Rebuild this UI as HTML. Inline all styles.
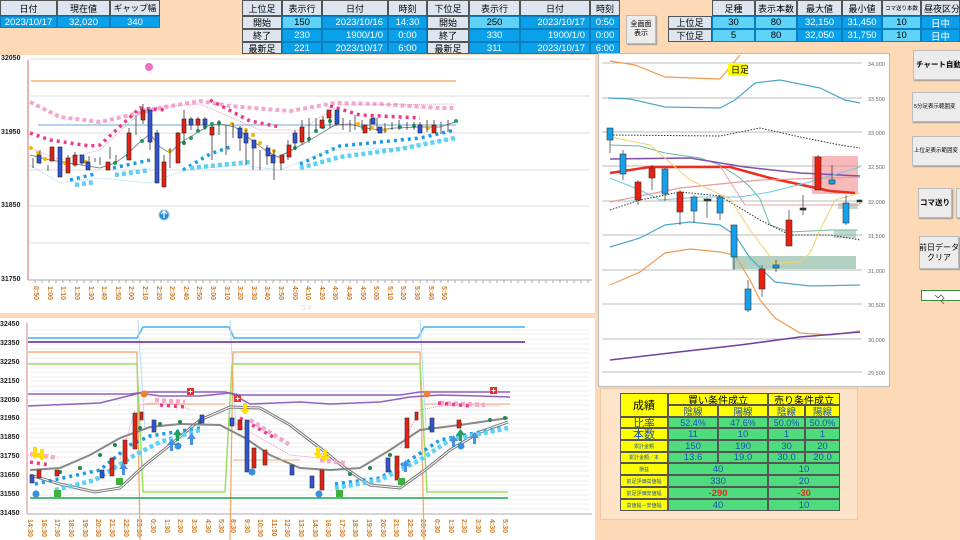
<!DOCTYPE html>
<html><head><meta charset="utf-8">
<style>
*{margin:0;padding:0;box-sizing:border-box}
body{width:960px;height:540px;overflow:hidden;background:#fdd9b6;font-family:"Liberation Sans","Noto Sans CJK JP",sans-serif;position:relative}
.c{position:absolute;display:flex;align-items:center;justify-content:center;font-size:9.5px;color:#000;white-space:nowrap;overflow:hidden}
.h{background:#dde6f0;border:1px solid #555;font-size:9px}
.b{background:#0aa0ea;color:#fff;border:1px solid #0a7fc0}
.lb{background:#5fd3f7;color:#000;border:1px solid #0a7fc0}
.btn{position:absolute;background:#ececec;border:1px solid #bbb;box-shadow:1px 1px 1px #999;font-size:8px;display:flex;align-items:center;justify-content:center;text-align:center;line-height:1.25;overflow:hidden;white-space:nowrap}
.y{background:#ffff00;border:1px solid #555}
.g{background:#4fdc7c;border:1px solid #555;color:#1d4fb0}
.ax{position:absolute;font-size:7px;font-weight:bold;color:#222}
</style></head><body>

<div class="c h" style="left:0;top:0;width:57px;height:16px">日付</div>
<div class="c h" style="left:57px;top:0;width:53px;height:16px">現在値</div>
<div class="c h" style="left:110px;top:0;width:50px;height:16px;font-size:8.5px">ギャップ幅</div>
<div class="c b" style="left:0;top:16px;width:57px;height:12px">2023/10/17</div>
<div class="c b" style="left:57px;top:16px;width:53px;height:12px">32,020</div>
<div class="c b" style="left:110px;top:16px;width:50px;height:12px">340</div>

<div class="c h" style="left:242px;top:0;width:40px;height:16px">上位足</div>
<div class="c h" style="left:282px;top:0;width:40px;height:16px">表示行</div>
<div class="c h" style="left:322px;top:0;width:66px;height:16px">日付</div>
<div class="c h" style="left:388px;top:0;width:39px;height:16px">時刻</div>
<div class="c h" style="left:427px;top:0;width:42px;height:16px">下位足</div>
<div class="c h" style="left:469px;top:0;width:51px;height:16px">表示行</div>
<div class="c h" style="left:520px;top:0;width:70px;height:16px">日付</div>
<div class="c h" style="left:590px;top:0;width:30px;height:16px">時刻</div>

<div class="c h" style="left:242px;top:16px;width:40px;height:13px">開始</div>
<div class="c lb" style="left:282px;top:16px;width:40px;height:13px">150</div>
<div class="c b" style="left:322px;top:16px;width:66px;height:13px;justify-content:flex-end;padding-right:4px">2023/10/16</div>
<div class="c b" style="left:388px;top:16px;width:39px;height:13px">14:30</div>
<div class="c h" style="left:427px;top:16px;width:42px;height:13px">開始</div>
<div class="c lb" style="left:469px;top:16px;width:51px;height:13px">250</div>
<div class="c b" style="left:520px;top:16px;width:70px;height:13px;justify-content:flex-end;padding-right:4px">2023/10/17</div>
<div class="c b" style="left:590px;top:16px;width:30px;height:13px">0:50</div>

<div class="c h" style="left:242px;top:29px;width:40px;height:13px">終了</div>
<div class="c b" style="left:282px;top:29px;width:40px;height:13px">230</div>
<div class="c b" style="left:322px;top:29px;width:66px;height:13px;justify-content:flex-end;padding-right:4px">1900/1/0</div>
<div class="c b" style="left:388px;top:29px;width:39px;height:13px">0:00</div>
<div class="c h" style="left:427px;top:29px;width:42px;height:13px">終了</div>
<div class="c b" style="left:469px;top:29px;width:51px;height:13px">330</div>
<div class="c b" style="left:520px;top:29px;width:70px;height:13px;justify-content:flex-end;padding-right:4px">1900/1/0</div>
<div class="c b" style="left:590px;top:29px;width:30px;height:13px">0:00</div>

<div class="c h" style="left:242px;top:42px;width:40px;height:12px">最新足</div>
<div class="c b" style="left:282px;top:42px;width:40px;height:12px">221</div>
<div class="c b" style="left:322px;top:42px;width:66px;height:12px;justify-content:flex-end;padding-right:4px">2023/10/17</div>
<div class="c b" style="left:388px;top:42px;width:39px;height:12px">6:00</div>
<div class="c h" style="left:427px;top:42px;width:42px;height:12px">最新足</div>
<div class="c b" style="left:469px;top:42px;width:51px;height:12px">311</div>
<div class="c b" style="left:520px;top:42px;width:70px;height:12px;justify-content:flex-end;padding-right:4px">2023/10/17</div>
<div class="c b" style="left:590px;top:42px;width:30px;height:12px">6:00</div>

<div class="btn" style="left:626px;top:15px;width:30px;height:29px;font-size:7px">全画面<br>表示</div>

<div class="c h" style="left:712px;top:0;width:43px;height:16px">足種</div>
<div class="c h" style="left:755px;top:0;width:42px;height:16px">表示本数</div>
<div class="c h" style="left:797px;top:0;width:45px;height:16px">最大値</div>
<div class="c h" style="left:842px;top:0;width:40px;height:16px">最小値</div>
<div class="c h" style="left:882px;top:0;width:39px;height:16px;font-size:5.5px">コマ送り本数</div>
<div class="c h" style="left:921px;top:0;width:39px;height:16px;justify-content:flex-start;padding-left:2px">昼夜区分</div>
<div class="c h" style="left:668px;top:16px;width:44px;height:13px">上位足</div>
<div class="c lb" style="left:712px;top:16px;width:43px;height:13px">30</div>
<div class="c lb" style="left:755px;top:16px;width:42px;height:13px">80</div>
<div class="c b" style="left:797px;top:16px;width:45px;height:13px">32,150</div>
<div class="c b" style="left:842px;top:16px;width:40px;height:13px">31,450</div>
<div class="c lb" style="left:882px;top:16px;width:39px;height:13px">10</div>
<div class="c b" style="left:921px;top:16px;width:39px;height:13px">日中</div>
<div class="c h" style="left:668px;top:29px;width:44px;height:13px">下位足</div>
<div class="c lb" style="left:712px;top:29px;width:43px;height:13px">5</div>
<div class="c lb" style="left:755px;top:29px;width:42px;height:13px">80</div>
<div class="c b" style="left:797px;top:29px;width:45px;height:13px">32,050</div>
<div class="c b" style="left:842px;top:29px;width:40px;height:13px">31,750</div>
<div class="c lb" style="left:882px;top:29px;width:39px;height:13px">10</div>
<div class="c b" style="left:921px;top:29px;width:39px;height:13px">日中</div>

<div style="position:absolute;left:0;top:55px;width:595px;height:258px;background:#fff"></div>
<div style="position:absolute;left:0;top:318px;width:595px;height:222px;background:#fff"></div>
<div style="position:absolute;left:598px;top:53px;width:292px;height:334px;background:#fff;border:1px solid #bbb"></div>

<div class="btn" style="left:913px;top:50px;width:50px;height:30px;font-size:7.5px;font-weight:bold;justify-content:flex-start;padding-left:2px">チャート自動調</div>
<div class="btn" style="left:912px;top:92px;width:50px;height:30px;font-size:5.5px;justify-content:flex-start;padding-left:1px">5分足表示範囲変</div>
<div class="btn" style="left:912px;top:136px;width:50px;height:30px;font-size:5.5px;justify-content:flex-start;padding-left:1px">上位足表示範囲変</div>
<div class="btn" style="left:918px;top:188px;width:34px;height:30px;font-size:7.5px;font-weight:bold">コマ送り</div>
<div class="btn" style="left:956px;top:188px;width:10px;height:30px"></div>
<div class="btn" style="left:919px;top:236px;width:40px;height:33px;font-size:8px">前日データ<br>クリア</div>
<div style="position:absolute;left:921px;top:290px;width:42px;height:11px;border:1px solid #3a8a3a;background:#fff"></div>

<div style="position:absolute;left:600px;top:388px;width:258px;height:132px;background:#fde3c8;border:1px solid #e8c9a8"></div>
<div class="c y" style="left:620px;top:393px;width:48px;height:24px;font-size:11px">成績</div>
<div class="c y" style="left:668px;top:393px;width:100px;height:12px;font-size:10px">買い条件成立</div>
<div class="c y" style="left:768px;top:393px;width:72px;height:12px;font-size:10px">売り条件成立</div>
<div class="c y" style="left:668px;top:405px;width:50px;height:12px;color:#1d4fb0">陰線</div>
<div class="c y" style="left:718px;top:405px;width:50px;height:12px;color:#1d4fb0">陽線</div>
<div class="c y" style="left:768px;top:405px;width:37px;height:12px;color:#1d4fb0">陰線</div>
<div class="c y" style="left:805px;top:405px;width:35px;height:12px;color:#1d4fb0">陽線</div>

<div class="c y" style="left:620px;top:417px;width:48px;height:11px;font-size:11px;color:#1d4fb0">比率</div>
<div class="c g" style="left:668px;top:417px;width:50px;height:11px;font-size:9px">52.4%</div>
<div class="c g" style="left:718px;top:417px;width:50px;height:11px;font-size:9px">47.6%</div>
<div class="c g" style="left:768px;top:417px;width:37px;height:11px;font-size:9px">50.0%</div>
<div class="c g" style="left:805px;top:417px;width:35px;height:11px;font-size:9px">50.0%</div>

<div class="c y" style="left:620px;top:428px;width:48px;height:12px;font-size:11px;color:#1d4fb0">本数</div>
<div class="c g" style="left:668px;top:428px;width:50px;height:12px">11</div>
<div class="c g" style="left:718px;top:428px;width:50px;height:12px">10</div>
<div class="c g" style="left:768px;top:428px;width:37px;height:12px">1</div>
<div class="c g" style="left:805px;top:428px;width:35px;height:12px">1</div>

<div class="c y" style="left:620px;top:440px;width:48px;height:12px;font-size:5px;color:#1d4fb0">累計金額</div>
<div class="c g" style="left:668px;top:440px;width:50px;height:12px">150</div>
<div class="c g" style="left:718px;top:440px;width:50px;height:12px">190</div>
<div class="c g" style="left:768px;top:440px;width:37px;height:12px">30</div>
<div class="c g" style="left:805px;top:440px;width:35px;height:12px">20</div>

<div class="c y" style="left:620px;top:452px;width:48px;height:11px;font-size:5px;color:#1d4fb0">累計金額／本</div>
<div class="c g" style="left:668px;top:452px;width:50px;height:11px">13.6</div>
<div class="c g" style="left:718px;top:452px;width:50px;height:11px">19.0</div>
<div class="c g" style="left:768px;top:452px;width:37px;height:11px">30.0</div>
<div class="c g" style="left:805px;top:452px;width:35px;height:11px">20.0</div>

<div class="c y" style="left:620px;top:463px;width:48px;height:12px;font-size:5px;color:#1d4fb0">損益</div>
<div class="c g" style="left:668px;top:463px;width:100px;height:12px">40</div>
<div class="c g" style="left:768px;top:463px;width:72px;height:12px">10</div>
<div class="c y" style="left:620px;top:475px;width:48px;height:12px;font-size:5px;color:#1d4fb0">前足評価高値幅</div>
<div class="c g" style="left:668px;top:475px;width:100px;height:12px">330</div>
<div class="c g" style="left:768px;top:475px;width:72px;height:12px">20</div>
<div class="c y" style="left:620px;top:487px;width:48px;height:12px;font-size:5px;color:#1d4fb0">前足評価安値幅</div>
<div class="c g" style="left:668px;top:487px;width:100px;height:12px;color:#e03020;font-weight:bold">-290</div>
<div class="c g" style="left:768px;top:487px;width:72px;height:12px;color:#e03020;font-weight:bold">-30</div>
<div class="c y" style="left:620px;top:499px;width:48px;height:12px;font-size:5px;color:#1d4fb0">高値幅－安値幅</div>
<div class="c g" style="left:668px;top:499px;width:100px;height:12px">40</div>
<div class="c g" style="left:768px;top:499px;width:72px;height:12px">10</div>

<div class="ax" style="left:1px;top:55px">32050</div>
<div class="ax" style="left:1px;top:129px">31950</div>
<div class="ax" style="left:1px;top:202px">31850</div>
<div class="ax" style="left:1px;top:276px">31750</div>

<div class="ax" style="left:0;top:321px">32450</div>
<div class="ax" style="left:0;top:340px">32350</div>
<div class="ax" style="left:0;top:359px">32250</div>
<div class="ax" style="left:0;top:378px">32150</div>
<div class="ax" style="left:0;top:397px">32050</div>
<div class="ax" style="left:0;top:415px">31950</div>
<div class="ax" style="left:0;top:434px">31850</div>
<div class="ax" style="left:0;top:453px">31750</div>
<div class="ax" style="left:0;top:472px">31650</div>
<div class="ax" style="left:0;top:491px">31550</div>
<div class="ax" style="left:0;top:510px">31450</div>

<svg style="position:absolute;left:0;top:0" width="960" height="540" font-family="Liberation Sans" >
<g stroke="#ddd" stroke-width="1">
<line x1="30" y1="59" x2="590" y2="59"/><line x1="30" y1="96" x2="590" y2="96"/><line x1="30" y1="133" x2="590" y2="133"/><line x1="30" y1="170" x2="590" y2="170"/><line x1="30" y1="206" x2="590" y2="206"/><line x1="30" y1="243" x2="590" y2="243"/>
</g>
<line x1="28" y1="60" x2="28" y2="280" stroke="#e08080" stroke-width="1.2"/>
<line x1="28" y1="280" x2="592" y2="280" stroke="#aaa"/>
<g stroke="#aaa"><path d="M35 280v3M42 280v3M49 280v3M56 280v3M63 280v3M70 280v3M77 280v3M84 280v3M91 280v3M98 280v3M105 280v3M112 280v3M119 280v3M126 280v3M133 280v3M140 280v3M147 280v3M154 280v3M161 280v3M168 280v3M175 280v3M182 280v3M189 280v3M196 280v3M203 280v3M210 280v3M217 280v3M224 280v3M231 280v3M238 280v3M245 280v3M252 280v3M259 280v3M266 280v3M273 280v3M280 280v3M287 280v3M294 280v3M301 280v3M308 280v3M315 280v3M322 280v3M329 280v3M336 280v3M343 280v3M350 280v3M357 280v3M364 280v3M371 280v3M378 280v3M385 280v3M392 280v3M399 280v3M406 280v3M413 280v3M420 280v3M427 280v3M434 280v3M441 280v3M448 280v3M455 280v3M462 280v3M469 280v3M476 280v3M483 280v3M490 280v3M497 280v3M504 280v3M511 280v3M518 280v3M525 280v3M532 280v3M539 280v3M546 280v3M553 280v3M560 280v3M567 280v3M574 280v3M581 280v3M588 280v3"/></g>
<g font-size="7" fill="#d07a20" font-weight="bold">
<text transform="translate(34,286) rotate(90)">0:50</text><text transform="translate(48,286) rotate(90)">1:00</text><text transform="translate(61,286) rotate(90)">1:10</text><text transform="translate(75,286) rotate(90)">1:20</text><text transform="translate(89,286) rotate(90)">1:30</text><text transform="translate(102,286) rotate(90)">1:40</text><text transform="translate(116,286) rotate(90)">1:50</text><text transform="translate(129,286) rotate(90)">2:00</text><text transform="translate(143,286) rotate(90)">2:10</text><text transform="translate(157,286) rotate(90)">2:20</text><text transform="translate(170,286) rotate(90)">2:30</text><text transform="translate(184,286) rotate(90)">2:40</text><text transform="translate(197,286) rotate(90)">2:50</text><text transform="translate(211,286) rotate(90)">3:00</text><text transform="translate(225,286) rotate(90)">3:10</text><text transform="translate(238,286) rotate(90)">3:20</text><text transform="translate(252,286) rotate(90)">3:30</text><text transform="translate(265,286) rotate(90)">3:40</text><text transform="translate(279,286) rotate(90)">3:50</text><text transform="translate(293,286) rotate(90)">4:00</text><text transform="translate(306,286) rotate(90)">4:10</text><text transform="translate(320,286) rotate(90)">4:20</text><text transform="translate(333,286) rotate(90)">4:30</text><text transform="translate(347,286) rotate(90)">4:40</text><text transform="translate(361,286) rotate(90)">4:50</text><text transform="translate(374,286) rotate(90)">5:00</text><text transform="translate(388,286) rotate(90)">5:10</text><text transform="translate(401,286) rotate(90)">5:20</text><text transform="translate(415,286) rotate(90)">5:30</text><text transform="translate(429,286) rotate(90)">5:40</text><text transform="translate(442,286) rotate(90)">5:50</text>
</g>
<text x="300" y="310" font-size="6" fill="#ccc">コマ</text>
<line x1="31" y1="81" x2="456" y2="81" stroke="#f0a050" stroke-width="1.3"/>
<line x1="38" y1="125" x2="456" y2="125" stroke="#9cc3f0" stroke-width="1.5"/>
<circle cx="149" cy="67" r="4" fill="#f070c0"/>
<path d="M30 102L60 117L100 122L165 107L200 101L230 106L290 111L335 103L380 104L440 108L455 108" fill="none" stroke="#f4a8cc" stroke-width="4" stroke-dasharray="4 3"/>
<path d="M30 133L50 140L90 146L100 145L140 108L165 110M210 100L250 121L280 127M330 106L360 115L420 118" fill="none" stroke="#ee3a8a" stroke-width="3.5" stroke-dasharray="3 4"/>
<path d="M70 180L95 174M113 168L150 160M183 170L210 154L230 147M300 164L340 146L420 138L455 130" fill="none" stroke="#1a9be6" stroke-width="3.5" stroke-dasharray="3 4"/>
<path d="M75 185L95 182M115 175L150 170M190 168L250 162M300 168L340 157L400 149L455 138" fill="none" stroke="#5fd0f5" stroke-width="4.5" stroke-dasharray="4 3"/>
<path d="M30 165L60 183L100 178L150 183L185 170L240 165L280 170L330 150L400 148L455 138" fill="none" stroke="#7cd0f0" stroke-width="0.8" stroke-dasharray="1 1"/>
<path d="M30 148L60 160L100 150L145 108L200 104L260 130L300 130L340 105L455 104" fill="none" stroke="#f080b0" stroke-width="0.8" stroke-dasharray="1 1"/>
<path d="M30 155L50 160L75 164L100 168L115 163L125 156L140 142L150 134L160 147L170 153L180 143L195 134L210 125L220 124L235 127L250 139L265 150L278 157L290 151L305 143L320 134L335 125L350 124L365 128L380 130L395 128L420 127L440 127L455 122" fill="none" stroke="#888" stroke-width="1"/>
<g fill="#f4b800"><circle cx="31" cy="148" r="2"/><circle cx="38" cy="153" r="2"/><circle cx="45" cy="159" r="2"/><circle cx="65" cy="163" r="2"/><circle cx="86" cy="162" r="2"/><circle cx="170" cy="151" r="2"/><circle cx="232" cy="124" r="2"/><circle cx="246" cy="130" r="2"/><circle cx="253" cy="135" r="2"/><circle cx="260" cy="143" r="2"/><circle cx="274" cy="151" r="2"/><circle cx="281" cy="157" r="2"/><circle cx="358" cy="124" r="2"/><circle cx="372" cy="128" r="2"/><circle cx="385" cy="130" r="2"/><circle cx="428" cy="128" r="2"/></g>
<g fill="#20a060"><circle cx="115" cy="163" r="2"/><circle cx="128" cy="156" r="2"/><circle cx="142" cy="141" r="2"/><circle cx="150" cy="132" r="2"/><circle cx="184" cy="143" r="2"/><circle cx="191" cy="138" r="2"/><circle cx="198" cy="131" r="2"/><circle cx="205" cy="127" r="2"/><circle cx="212" cy="124" r="2"/><circle cx="219" cy="123" r="2"/><circle cx="295" cy="148" r="2"/><circle cx="309" cy="139" r="2"/><circle cx="316" cy="131" r="2"/><circle cx="323" cy="127" r="2"/><circle cx="330" cy="121" r="2"/><circle cx="337" cy="121" r="2"/><circle cx="400" cy="127" r="2"/><circle cx="414" cy="126" r="2"/><circle cx="456" cy="121" r="2"/></g>
<g stroke="#333" stroke-width="0.8">
<path d="M33 158v10M40 150v14M48 165v6M53 147v14M61 147v14M68 155v10M75 152v15M82 155v10M89 156v8M95 158v4M100 157v8M110 147v12M116 155v8M129 128v32M136 115v20M143 104v20M150 110v40M157 130v34M164 155v28M170 148v20M178 132v22M184 110v35M191 117v13M198 117v13M205 117v13M212 125v35M219 120v15M226 125v30M233 123v15M240 126v25M246 130v35M253 140v30M260 150v20M267 145v20M274 150v30M281 155v15M288 140v20M295 130v20M302 120v25M309 118v25M316 118v13M323 116v10M330 110v18M336 112v14M343 118v12M350 120v12M355 115v15M362 120v10M370 119v12M377 118v13M385 123v10M392 122v8M399 120v10M407 122v8M414 122v8M420 122v8M427 120v12M434 120v12M441 122v12M448 120v12"/>
</g>
<g stroke="#222" stroke-width="0.6">
<rect x="37" y="155" width="4" height="8" fill="#2e55d8"/><rect x="50" y="147" width="4" height="14" fill="#e82010"/><rect x="58" y="147" width="4" height="30" fill="#2e55d8"/><rect x="66" y="158" width="4" height="15" fill="#e82010"/><rect x="73" y="155" width="4" height="10" fill="#e82010"/><rect x="80" y="155" width="4" height="8" fill="#2e55d8"/><rect x="86" y="162" width="4" height="8" fill="#2e55d8"/><rect x="106" y="162" width="4" height="8" fill="#e82010"/><rect x="127" y="133" width="4" height="27" fill="#e82010"/><rect x="141" y="110" width="4" height="10" fill="#e82010"/><rect x="148" y="110" width="4" height="32" fill="#2e55d8"/><rect x="155" y="133" width="4" height="50" fill="#2e55d8"/><rect x="162" y="162" width="4" height="25" fill="#e82010"/><rect x="176" y="133" width="4" height="30" fill="#e82010"/><rect x="182" y="119" width="4" height="14" fill="#e82010"/><rect x="189" y="119" width="4" height="6" fill="#2e55d8"/><rect x="196" y="119" width="4" height="6" fill="#e82010"/><rect x="203" y="119" width="4" height="6" fill="#2e55d8"/><rect x="210" y="127" width="4" height="8" fill="#e82010"/><rect x="238" y="128" width="4" height="10" fill="#2e55d8"/><rect x="244" y="133" width="4" height="10" fill="#2e55d8"/><rect x="252" y="140" width="4" height="8" fill="#2e55d8"/><rect x="266" y="148" width="4" height="8" fill="#2e55d8"/><rect x="271" y="155" width="4" height="8" fill="#2e55d8"/><rect x="280" y="155" width="4" height="8" fill="#e82010"/><rect x="287" y="145" width="4" height="12" fill="#e82010"/><rect x="293" y="133" width="4" height="10" fill="#2e55d8"/><rect x="300" y="127" width="4" height="15" fill="#e82010"/><rect x="320" y="120" width="4" height="8" fill="#e82010"/><rect x="327" y="110" width="4" height="8" fill="#e82010"/><rect x="335" y="110" width="4" height="14" fill="#2e55d8"/><rect x="363" y="125" width="4" height="8" fill="#e82010"/><rect x="371" y="118" width="4" height="6" fill="#2e55d8"/><rect x="378" y="127" width="4" height="6" fill="#2e55d8"/><rect x="418" y="125" width="4" height="8" fill="#2e55d8"/><rect x="432" y="125" width="4" height="8" fill="#e82010"/></g>
<circle cx="164" cy="215" r="5" fill="#1a8ae0" stroke="#9cd" stroke-width="1"/><path d="M164 218v-6M161 214l3-3 3 3" stroke="#fff" stroke-width="1.3" fill="none"/>

<g stroke="#e6e6e6" stroke-width="0.8">
<path d="M30 330H590M30 334H590M30 339H590M30 344H590M30 349H590M30 353H590M30 358H590M30 363H590M30 368H590M30 372H590M30 377H590M30 381H590M30 386H590M30 391H590M30 396H590M30 400H590M30 405H590M30 410H590M30 414H590M30 419H590M30 424H590M30 429H590M30 433H590M30 438H590M30 443H590M30 447H590M30 452H590M30 457H590M30 462H590M30 466H590M30 471H590M30 476H590M30 481H590M30 485H590M30 490H590M30 495H590M30 500H590M30 504H590M30 509H590"/>
</g>
<line x1="27" y1="323" x2="27" y2="514" stroke="#e08080"/>
<line x1="27" y1="514" x2="592" y2="514" stroke="#aaa"/>
<g font-size="7" fill="#d07a20" font-weight="bold">
<text transform="translate(28,519) rotate(90)">14:30</text><text transform="translate(42,519) rotate(90)">16:30</text><text transform="translate(55,519) rotate(90)">17:30</text><text transform="translate(69,519) rotate(90)">18:30</text><text transform="translate(83,519) rotate(90)">19:30</text><text transform="translate(96,519) rotate(90)">20:30</text><text transform="translate(110,519) rotate(90)">21:30</text><text transform="translate(124,519) rotate(90)">22:30</text><text transform="translate(137,519) rotate(90)">23:30</text><text transform="translate(151,519) rotate(90)">0:30</text><text transform="translate(165,519) rotate(90)">1:30</text><text transform="translate(178,519) rotate(90)">2:30</text><text transform="translate(192,519) rotate(90)">3:30</text><text transform="translate(206,519) rotate(90)">4:30</text><text transform="translate(219,519) rotate(90)">5:30</text><text transform="translate(231,519) rotate(90)">8:30</text><text transform="translate(245,519) rotate(90)">9:30</text><text transform="translate(258,519) rotate(90)">10:30</text><text transform="translate(272,519) rotate(90)">11:30</text><text transform="translate(285,519) rotate(90)">12:30</text><text transform="translate(299,519) rotate(90)">13:30</text><text transform="translate(313,519) rotate(90)">14:30</text><text transform="translate(326,519) rotate(90)">16:30</text><text transform="translate(340,519) rotate(90)">17:30</text><text transform="translate(353,519) rotate(90)">18:30</text><text transform="translate(367,519) rotate(90)">19:30</text><text transform="translate(381,519) rotate(90)">20:30</text><text transform="translate(394,519) rotate(90)">21:30</text><text transform="translate(408,519) rotate(90)">22:30</text><text transform="translate(421,519) rotate(90)">23:30</text><text transform="translate(435,519) rotate(90)">0:30</text><text transform="translate(449,519) rotate(90)">1:30</text><text transform="translate(462,519) rotate(90)">2:30</text><text transform="translate(476,519) rotate(90)">3:30</text><text transform="translate(490,519) rotate(90)">4:30</text><text transform="translate(503,519) rotate(90)">5:30</text>
</g>
<path d="M28 338H137L143 327H229L234 338H418L424 327H525" fill="none" stroke="#5cc0f0" stroke-width="1.8"/>
<path d="M138 320L145 430M230 320L236 430M420 320L426 430" stroke="#b8dcf8" stroke-width="1"/>
<line x1="28" y1="342" x2="525" y2="342" stroke="#7040a0" stroke-width="1.8"/>
<path d="M28 352H137L140 540M230 540L233 352H420L424 540" fill="none" stroke="#f4a870" stroke-width="1.3"/>
<path d="M28 364H137L143 492H225L232 364H420L427 492H508" fill="none" stroke="#9de060" stroke-width="1.5"/>
<line x1="30" y1="498" x2="508" y2="498" stroke="#20a050" stroke-width="1.5"/>
<path d="M28 394H130L145 392H225L240 395H400L420 392H510" fill="none" stroke="#9060c0" stroke-width="1.5"/>
<path d="M28 406L50 405L100 403L120 398L140 393L160 396L200 396L230 393L250 404L300 402L330 404L380 402L410 397L440 395L480 396L510 397" fill="none" stroke="#9060c0" stroke-width="1.5"/>
<path d="M30 475L60 484L95 492L120 488L145 465L170 445L200 420L230 407L260 408L290 425L320 448L345 468L370 485L400 488L425 470L450 450L480 432L508 422" fill="none" stroke="#777" stroke-width="3"/>
<path d="M30 475L60 484L95 492L120 488L145 465L170 445L200 420L230 407L260 408L290 425L320 448L345 468L370 485L400 488L425 470L450 450L480 432L508 422" fill="none" stroke="#fff" stroke-width="1"/>
<path d="M30 470L60 468L90 455L120 438L150 427L180 424L220 425L245 438L270 455L300 468L330 470L360 468L390 450L420 430L460 425L508 418" fill="none" stroke="#888" stroke-width="2"/>
<path d="M28 455H50M120 460L135 410M140 405L150 403L180 405L190 410M230 420L260 438L290 455L320 458M400 448L420 410L440 406L500 406" fill="none" stroke="#f080b0" stroke-width="0.8" stroke-dasharray="1 1"/>
<path d="M145 404H225M233 460H300M425 404H510" stroke="#f4a870" stroke-width="1"/>
<path d="M30 454L58 458M155 400L185 402M250 420L290 445M320 460L345 463M440 403L485 405" fill="none" stroke="#f4a8cc" stroke-width="4.5" stroke-dasharray="4 3"/>
<path d="M30 462L50 465M160 405L185 407M240 418L275 438M438 403L470 406" fill="none" stroke="#ee3a8a" stroke-width="3.5" stroke-dasharray="3 4"/>
<path d="M35 484L100 470L130 445L150 436L200 428M335 484L380 478L410 460L440 440L500 428" fill="none" stroke="#1a9be6" stroke-width="3.5" stroke-dasharray="3 4"/>
<path d="M55 490L95 480L135 455L160 442L200 430M335 488L380 480L420 460L450 440L508 428" fill="none" stroke="#5fd0f5" stroke-width="4.5" stroke-dasharray="4 3"/>
<g fill="#20864a"><circle cx="60" cy="472" r="2"/><circle cx="80" cy="468" r="2"/><circle cx="100" cy="455" r="2"/><circle cx="115" cy="445" r="2"/><circle cx="140" cy="428" r="2"/><circle cx="160" cy="424" r="2"/><circle cx="180" cy="422" r="2"/><circle cx="200" cy="422" r="2"/><circle cx="350" cy="474" r="2"/><circle cx="370" cy="468" r="2"/><circle cx="390" cy="455" r="2"/><circle cx="430" cy="428" r="2"/><circle cx="460" cy="424" r="2"/><circle cx="490" cy="420" r="2"/><circle cx="505" cy="418" r="2"/></g>
<g stroke="#333" stroke-width="0.6">
<rect x="30" y="475" width="4" height="8" fill="#2e55d8"/><rect x="37" y="470" width="4" height="8" fill="#e82010"/><rect x="55" y="470" width="4" height="6" fill="#e82010"/><rect x="100" y="470" width="4" height="8" fill="#2e55d8"/><rect x="110" y="458" width="4" height="18" fill="#e82010"/><rect x="123" y="440" width="4" height="24" fill="#e82010"/><rect x="133" y="413" width="4" height="36" fill="#e82010"/><rect x="140" y="412" width="3" height="8" fill="#e82010"/><rect x="152" y="420" width="4" height="12" fill="#2e55d8"/><rect x="200" y="415" width="4" height="8" fill="#2e55d8"/><rect x="230" y="418" width="4" height="8" fill="#2e55d8"/><rect x="238" y="420" width="4" height="10" fill="#e82010"/><rect x="245" y="420" width="4" height="52" fill="#2e55d8"/><rect x="252" y="448" width="4" height="20" fill="#e82010"/><rect x="263" y="450" width="4" height="15" fill="#e82010"/><rect x="290" y="465" width="4" height="10" fill="#2e55d8"/><rect x="310" y="476" width="4" height="12" fill="#2e55d8"/><rect x="320" y="470" width="4" height="20" fill="#e82010"/><rect x="386" y="458" width="4" height="14" fill="#2e55d8"/><rect x="395" y="456" width="4" height="24" fill="#e82010"/><rect x="405" y="418" width="4" height="30" fill="#e82010"/><rect x="415" y="412" width="3" height="8" fill="#e82010"/><rect x="430" y="418" width="4" height="14" fill="#2e55d8"/><rect x="457" y="420" width="4" height="8" fill="#e82010"/></g>
<g fill="#ffe000"><path d="M33 447h4v6h3l-5 6-5-6h3z"/><path d="M40 449h4v6h3l-5 6-5-6h3z"/><path d="M243 403h4v6h3l-5 6-5-6h3z"/><path d="M316 447h4v6h3l-5 6-5-6h3z"/><path d="M323 450h4v6h3l-5 6-5-6h3z"/></g>
<g fill="#4a90e0"><path d="M122 475h3v-6h3l-4.5-6-4.5 6h3z"/><path d="M170 451h3v-6h3l-4.5-6-4.5 6h3z"/><path d="M190 445h3v-6h3l-4.5-6-4.5 6h3z"/><path d="M404 472h3v-6h3l-4.5-6-4.5 6h3z"/><path d="M452 447h3v-6h3l-4.5-6-4.5 6h3z"/><path d="M473 444h3v-6h3l-4.5-6-4.5 6h3z"/></g>
<g fill="#20a060"><path d="M176 441h3v-6h3l-4.5-6-4.5 6h3z"/><path d="M459 441h3v-6h3l-4.5-6-4.5 6h3z"/></g>
<g fill="#3a90e0"><circle cx="36" cy="494" r="3.5"/><circle cx="178" cy="446" r="3.5"/><circle cx="252" cy="472" r="3.5"/><circle cx="319" cy="494" r="3.5"/><circle cx="461" cy="446" r="3.5"/></g>
<g fill="#40b040"><rect x="54" y="490" width="7" height="7"/><rect x="116" y="478" width="7" height="7"/><rect x="336" y="490" width="7" height="7"/><rect x="398" y="478" width="7" height="7"/></g>
<g fill="#e83030"><rect x="187" y="388" width="7" height="7"/><rect x="234" y="395" width="7" height="7"/><rect x="490" y="387" width="7" height="7"/></g>
<g stroke="#fff" stroke-width="1"><path d="M190.5 389.5v4M188.5 391.5h4M237.5 396.5v4M235.5 398.5h4M493.5 388.5v4M491.5 390.5h4"/></g>
<g fill="#f08030"><circle cx="144" cy="394" r="3.5"/><circle cx="427" cy="394" r="3.5"/></g>

<g stroke="#bbb" stroke-width="1">
<path d="M602 63H862M602 98H862M602 132H862M602 166H862M602 201H862M602 235H862M602 270H862M602 304H862M602 339H862M602 372H862"/>
</g>
<g font-size="5.5" fill="#666"><text x="868" y="66">34,000</text><text x="868" y="101">33,500</text><text x="868" y="135">33,000</text><text x="868" y="169">32,500</text><text x="868" y="204">32,000</text><text x="868" y="238">31,500</text><text x="868" y="273">31,000</text><text x="868" y="307">30,500</text><text x="868" y="342">30,000</text><text x="868" y="375">29,500</text></g>
<rect x="812" y="156" width="46" height="38" fill="#f08080" opacity="0.55"/>
<rect x="732" y="256" width="124" height="13" fill="#7fb39a" opacity="0.6"/>
<rect x="838" y="203" width="20" height="6" fill="#7fb39a" opacity="0.5"/>
<rect x="834" y="230" width="22" height="8" fill="#7fb39a" opacity="0.5"/>
<path d="M610 61L635 65L665 77L720 79L726 72L740 55" fill="none" stroke="#f09a50" stroke-width="1.2"/>
<path d="M608 98L630 99L665 107L720 108L735 100L755 83L780 80L820 88L845 100L860 103" fill="none" stroke="#4ea6c8" stroke-width="1.2"/>
<path d="M610 135L720 136L760 128L800 137L840 145L860 148" fill="none" stroke="#333" stroke-width="1" stroke-dasharray="1.5 1.5"/>
<path d="M610 145L640 146L665 153L700 158L720 165L740 178L750 187L760 199L770 225L790 232L830 230L858 230" fill="none" stroke="#6cbaa0" stroke-width="1"/>
<path d="M610 159L690 158L745 167L800 173L860 176" fill="none" stroke="#8050b0" stroke-width="1.5"/>
<path d="M610 173L650 167L730 167L770 178L830 191L855 193" fill="none" stroke="#ee2b20" stroke-width="2.5"/>
<path d="M610 202L680 188L760 180L860 177" fill="none" stroke="#e89a9a" stroke-width="1.2"/>
<path d="M610 178L640 190L660 200L700 197L740 197L770 192L810 182L860 167" fill="none" stroke="#70c8e8" stroke-width="1"/>
<path d="M610 210L640 200L680 192L720 196L760 220L790 235L830 235L860 240" fill="none" stroke="#333" stroke-width="1" stroke-dasharray="1.5 1.5"/>
<path d="M610 137L650 145L690 180L730 199L750 230L775 263L800 262L810 253L820 230L835 200L860 193" fill="none" stroke="#f0d070" stroke-width="1"/>
<path d="M720 166L745 205L757 205L790 205L860 205" fill="none" stroke="#e8a0a0" stroke-width="1"/>
<path d="M610 247L640 238L665 225L690 222L720 225L735 235L750 258L775 282L810 286L860 285" fill="none" stroke="#4ea6c8" stroke-width="1.2"/>
<path d="M610 285L640 272L665 253L690 249L720 252L735 255L750 280L760 300L775 318L800 333L830 335L860 331" fill="none" stroke="#f09a50" stroke-width="1.2"/>
<path d="M610 360L670 353L740 345L800 337L860 332" fill="none" stroke="#7040a0" stroke-width="1.5"/>
<g stroke="#333" stroke-width="0.7">
<path d="M610 128v25M623 150v30M638 180v25M652 165v25M665 168v33M680 190v35M694 195v28M707 198v20M720 195v25M734 225v45M748 280v32M762 265v32M776 260v12M789 210v27M803 195v20M818 155v25M832 165v20M846 195v30M860 203v1"/>
</g>
<g stroke="#333" stroke-width="0.6">
<rect x="607" y="128" width="6" height="12" fill="#14a0ea"/><rect x="620" y="154" width="6" height="20" fill="#14a0ea"/><rect x="635" y="182" width="6" height="18" fill="#e82010"/><rect x="649" y="168" width="6" height="10" fill="#e82010"/><rect x="662" y="169" width="6" height="25" fill="#14a0ea"/><rect x="677" y="192" width="6" height="20" fill="#e82010"/><rect x="691" y="197" width="6" height="14" fill="#14a0ea"/><rect x="704" y="199" width="7" height="2" fill="#333"/><rect x="717" y="197" width="6" height="16" fill="#14a0ea"/><rect x="731" y="225" width="6" height="32" fill="#14a0ea"/><rect x="745" y="289" width="6" height="21" fill="#14a0ea"/><rect x="759" y="269" width="6" height="20" fill="#e82010"/><rect x="773" y="265" width="6" height="3" fill="#14a0ea"/><rect x="786" y="220" width="6" height="26" fill="#e82010"/><rect x="800" y="208" width="6" height="2" fill="#333"/><rect x="815" y="157" width="6" height="33" fill="#e82010"/><rect x="829" y="180" width="6" height="4" fill="#14a0ea"/><rect x="843" y="203" width="6" height="20" fill="#14a0ea"/><rect x="857" y="200" width="5" height="2" fill="#333"/></g>
<rect x="728" y="63" width="20" height="13" fill="#ffff00"/><text x="731" y="73" font-size="9" font-family="Liberation Sans,Noto Sans CJK JP,sans-serif">日足</text>
<path d="M935 295l3 3 3-3 3 3-3 3 3 3" stroke="#555" stroke-width="0.8" fill="none"/>
</svg>
</body></html>
